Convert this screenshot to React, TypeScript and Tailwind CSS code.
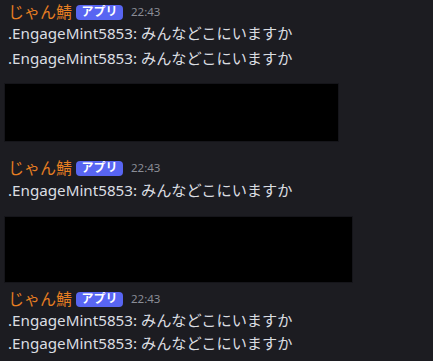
const font = { fontFamily: '"Noto Sans", "Noto Sans CJK JP", sans-serif' };

const Header = ({ className = "" }: { className?: string }) => (
  <div className={`flex items-center h-[22px] pl-2 ${className}`}>
    <span className="text-[16px] leading-none text-[#e67e22]">じゃん鯖</span>
    <span className="ml-1 h-[15px] w-[47px] flex items-center justify-center rounded-[4px] bg-[#5865f2] text-white text-[12px] font-bold leading-none">
      アプリ
    </span>
    <span className="ml-2 text-[11.5px] text-[#8a8d96] leading-none">22:43</span>
  </div>
);

const Line = ({ className = "" }: { className?: string }) => (
  <div className={`h-[22px] flex items-center pl-2 text-[15.2px] text-[#dbdee1] leading-none whitespace-nowrap ${className}`}>
    .EngageMint5853: みんなどこにいますか
  </div>
);

export default function App() {
  return (
    <div className="w-[433px] h-[361px] bg-[#1c1c21] overflow-hidden pt-[1px]" style={font}>
      <Header className="h-[21px]" />
      <Line />
      <Line className="mt-[3px]" />
      <div className="ml-1 mt-[13px] w-[335px] h-[59px] bg-black border border-[#15151a]" />
      <Header className="mt-[15px]" />
      <Line className="mt-[1px]" />
      <div className="ml-1 mt-[14px] w-[349px] h-[67px] bg-black border border-[#15151a]" />
      <Header className="mt-[5px]" />
      <Line />
      <Line className="mt-[1px]" />
    </div>
  );
}
